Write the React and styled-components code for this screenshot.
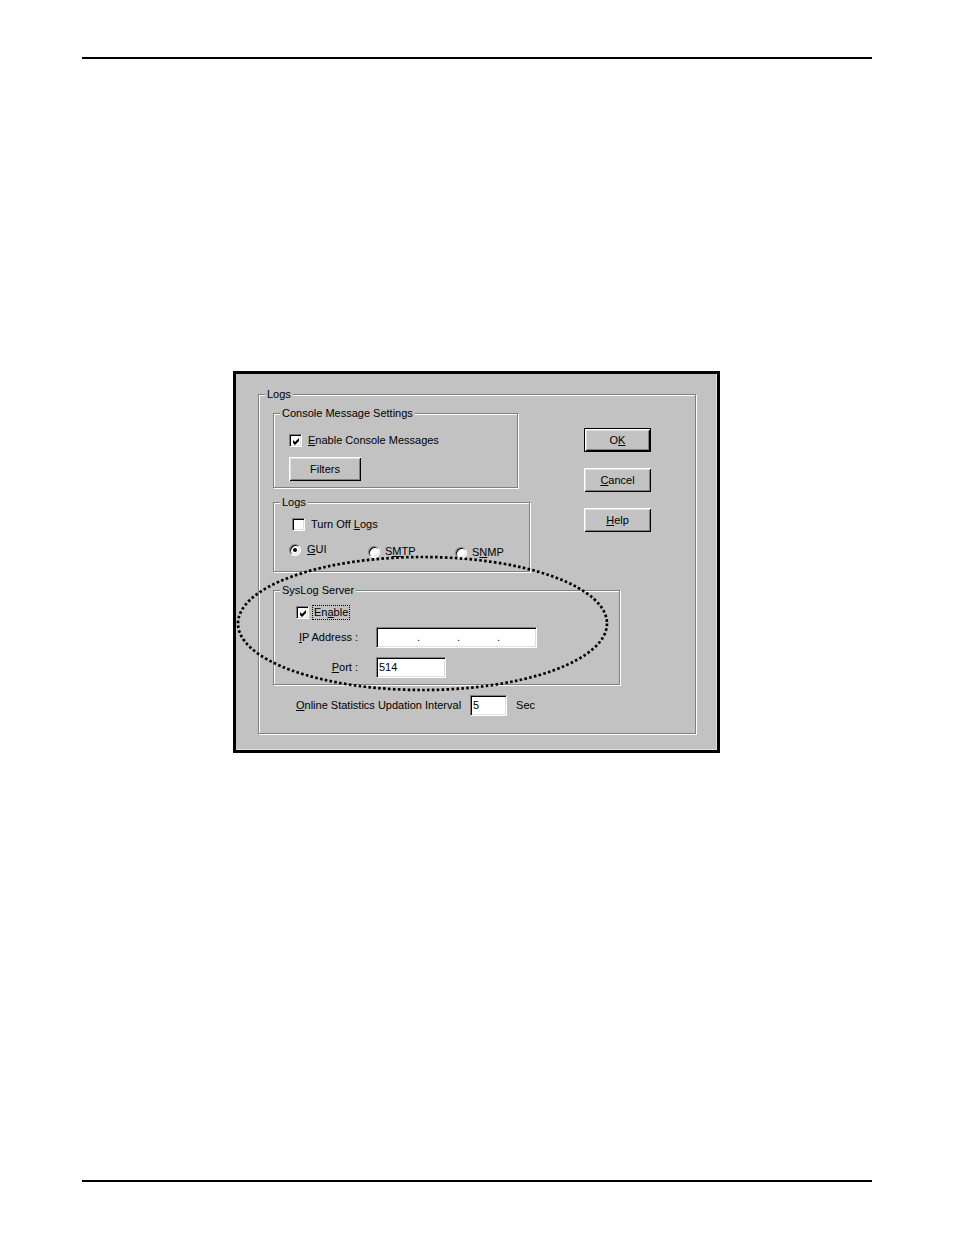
import React from 'react';
import styled, { createGlobalStyle } from 'styled-components';

const Global = createGlobalStyle`
  html, body { margin: 0; padding: 0; background: #fff; }
  body { font-family: "Liberation Sans", Arial, sans-serif; }
`;

const Page = styled.div`
  width: 954px;
  min-height: 1235px;
  padding-top: 57px;
  box-sizing: border-box;
  display: flex;
  flex-direction: column;
`;

const Rule = styled.div`
  margin-left: 82px;
  margin-top: ${p => p.$top || 0}px;
  width: 790px;
  height: 2px;
  background: #000;
`;

const Dialog = styled.div`
  position: relative;
  margin: 312px 0 0 233px;
  width: 487px;
  height: 382px;
  box-sizing: border-box;
  border: 3px solid #000;
  background: #c2c2c2;
  box-shadow: inset -1px -1px 0 #e2e2e2;
  padding: 20px 21px 0 22px;
  font: 11px/13px "Liberation Sans", Arial, sans-serif;
  color: #000;
`;

const GroupBox = styled.div`
  box-sizing: border-box;
  width: ${p => (p.$w ? `${p.$w}px` : 'auto')};
  margin-top: ${p => p.$mt || 0}px;
  border: 1px solid #808080;
  box-shadow: inset 1px 1px 0 #fff, 1px 1px 0 #fff;
`;

const Caption = styled.div`
  width: fit-content;
  margin: -7px 0 0 6px;
  padding: 0 2px;
  background: #c2c2c2;
  line-height: 13px;
  white-space: nowrap;
`;

const GroupBody = styled.div`
  padding: ${p => p.$pad};
`;

const TopSection = styled.div`
  display: flex;
  align-items: flex-start;
  gap: 54px;
`;

const LeftStack = styled.div`
  display: flex;
  flex-direction: column;
  align-items: flex-start;
  width: 257px;
`;

const ButtonCol = styled.div`
  display: flex;
  flex-direction: column;
  gap: 16px;
  margin-top: 15px;
`;

const Button = styled.button`
  box-sizing: border-box;
  width: ${p => p.$w}px;
  height: ${p => p.$h || 24}px;
  margin: 0;
  margin-top: ${p => p.$mt || 0}px;
  padding: 0;
  background: #c2c2c2;
  font: 11px/13px "Liberation Sans", Arial, sans-serif;
  color: #000;
  border: ${p => (p.$default ? '1px solid #000' : 'none')};
  box-shadow: inset 1px 1px 0 #fff, inset -1px -1px 0 #000,
    inset 2px 2px 0 #dfdfdf, inset -2px -2px 0 #808080;
  display: flex;
  align-items: center;
  justify-content: center;
`;

const Key = styled.span`
  text-decoration: underline;
  text-underline-offset: 1px;
`;

const CheckRow = styled.div`
  display: flex;
  align-items: center;
  gap: ${p => p.$gap ?? 6}px;
  margin-left: ${p => p.$ml || 0}px;
  margin-top: ${p => p.$mt || 0}px;
  white-space: nowrap;
`;

const CheckBox = styled.span`
  flex: none;
  width: 13px;
  height: 13px;
  box-sizing: border-box;
  background: #fff;
  border: 1px solid;
  border-color: #808080 #fff #fff #808080;
  box-shadow: inset 1px 1px 0 #000, inset -1px -1px 0 #dfdfdf;
  display: flex;
  align-items: center;
  justify-content: center;
`;

const CheckMark = () => (
  <svg width="7" height="7" viewBox="0 0 7 7" style={{ display: 'block', marginLeft: 1, marginTop: 1 }}>
    <path d="M0 2 L2 4 L6 0 L6 3 L2 7 L0 5 Z" fill="#000" />
  </svg>
);

const Check = ({ on }) => <CheckBox>{on && <CheckMark />}</CheckBox>;

const RadioRow = styled.div`
  display: flex;
  align-items: flex-start;
  margin-top: 12px;
`;

const RadioItem = styled.div`
  display: flex;
  align-items: center;
  gap: ${p => p.$gap ?? 5}px;
  width: ${p => (p.$w ? `${p.$w}px` : 'auto')};
  margin-top: ${p => p.$dy || 0}px;
  white-space: nowrap;
`;

const RadioCircle = styled.span`
  flex: none;
  width: 12px;
  height: 12px;
  box-sizing: border-box;
  border-radius: 50%;
  background: #fff;
  border: 1px solid;
  border-color: #808080 #fff #fff #808080;
  box-shadow: inset 1px 1px 0 #000, inset -1px -1px 0 #dfdfdf;
  display: flex;
  align-items: center;
  justify-content: center;
  &::after {
    content: '';
    display: ${p => (p.$on ? 'block' : 'none')};
    width: 4px;
    height: 4px;
    border-radius: 50%;
    background: #000;
  }
`;

const FocusLabel = styled.span`
  border: 1px dotted #000;
  padding: 0 1px;
  line-height: 13px;
`;

const FieldGrid = styled.div`
  display: grid;
  grid-template-columns: 80px max-content;
  row-gap: 9px;
  align-items: center;
  margin-top: 7px;
`;

const FieldLabel = styled.span`
  text-align: right;
  padding-right: 18px;
  white-space: nowrap;
`;

const TextBox = styled.div`
  box-sizing: border-box;
  width: ${p => p.$w}px;
  height: ${p => p.$h || 21}px;
  background: #fff;
  border: 1px solid;
  border-color: #808080 #fff #fff #808080;
  box-shadow: inset 1px 1px 0 #000, inset -1px -1px 0 #dfdfdf;
  display: flex;
  align-items: center;
  padding-left: ${p => p.$pl ?? 2}px;
  white-space: nowrap;
`;

const Octet = styled.span`
  width: 37px;
  flex: none;
`;

const Dot = styled.span`
  width: 3px;
  flex: none;
`;

const StatsRow = styled.div`
  display: flex;
  align-items: center;
  gap: 9px;
  margin: 10px 0 0 23px;
  white-space: nowrap;
`;

const Ellipse = styled.svg`
  position: absolute;
  left: 0;
  top: 180px;
  overflow: visible;
  pointer-events: none;
`;

export default function App() {
  return (
    <>
      <Global />
      <Page>
        <Rule />
        <Dialog>
          <GroupBox>
            <Caption>Logs</Caption>
            <GroupBody $pad="12px 0 17px 14px">
              <TopSection>
                <LeftStack>
                  <GroupBox $w={245}>
                    <Caption>Console Message Settings</Caption>
                    <GroupBody $pad="14px 0 6px 15px">
                      <CheckRow>
                        <Check on />
                        <span><Key>E</Key>nable Console Messages</span>
                      </CheckRow>
                      <Button $w={72} $mt={10}>Filters</Button>
                    </GroupBody>
                  </GroupBox>
                  <GroupBox $w={257} $mt={14}>
                    <Caption>Logs</Caption>
                    <GroupBody $pad="9px 0 12px 15px">
                      <CheckRow $ml={3}>
                        <Check />
                        <span>Turn Off <Key>L</Key>ogs</span>
                      </CheckRow>
                      <RadioRow>
                        <RadioItem $w={79} $gap={6}>
                          <RadioCircle $on />
                          <span><Key>G</Key>UI</span>
                        </RadioItem>
                        <RadioItem $w={87} $dy={2}>
                          <RadioCircle />
                          <span>S<Key>M</Key>TP</span>
                        </RadioItem>
                        <RadioItem $dy={3}>
                          <RadioCircle />
                          <span>S<Key>N</Key>MP</span>
                        </RadioItem>
                      </RadioRow>
                    </GroupBody>
                  </GroupBox>
                </LeftStack>
                <ButtonCol>
                  <Button $w={67} $default>O<Key>K</Key></Button>
                  <Button $w={67}><Key>C</Key>ancel</Button>
                  <Button $w={67}><Key>H</Key>elp</Button>
                </ButtonCol>
              </TopSection>
              <GroupBox $w={347} $mt={18}>
                <Caption>SysLog Server</Caption>
                <GroupBody $pad="8px 0 6px 22px">
                  <CheckRow $gap={3}>
                    <Check on />
                    <FocusLabel>En<Key>a</Key>ble</FocusLabel>
                  </CheckRow>
                  <FieldGrid>
                    <FieldLabel><Key>I</Key>P Address :</FieldLabel>
                    <TextBox $w={161} $pl={3}>
                      <Octet /><Dot>.</Dot><Octet /><Dot>.</Dot><Octet /><Dot>.</Dot><Octet />
                    </TextBox>
                    <FieldLabel><Key>P</Key>ort :</FieldLabel>
                    <TextBox $w={70}>514</TextBox>
                  </FieldGrid>
                </GroupBody>
              </GroupBox>
              <StatsRow>
                <span><Key>O</Key>nline Statistics Updation Interval</span>
                <TextBox $w={37}>5</TextBox>
                <span>Sec</span>
              </StatsRow>
            </GroupBody>
          </GroupBox>
          <Ellipse width="380" height="142" viewBox="0 0 380 142">
            <ellipse
              cx="186.5"
              cy="69.5"
              rx="184.5"
              ry="66.5"
              fill="none"
              stroke="#000"
              strokeWidth="2.7"
              strokeDasharray="2.6 2.3"
            />
          </Ellipse>
        </Dialog>
        <Rule $top={427} />
      </Page>
    </>
  );
}
